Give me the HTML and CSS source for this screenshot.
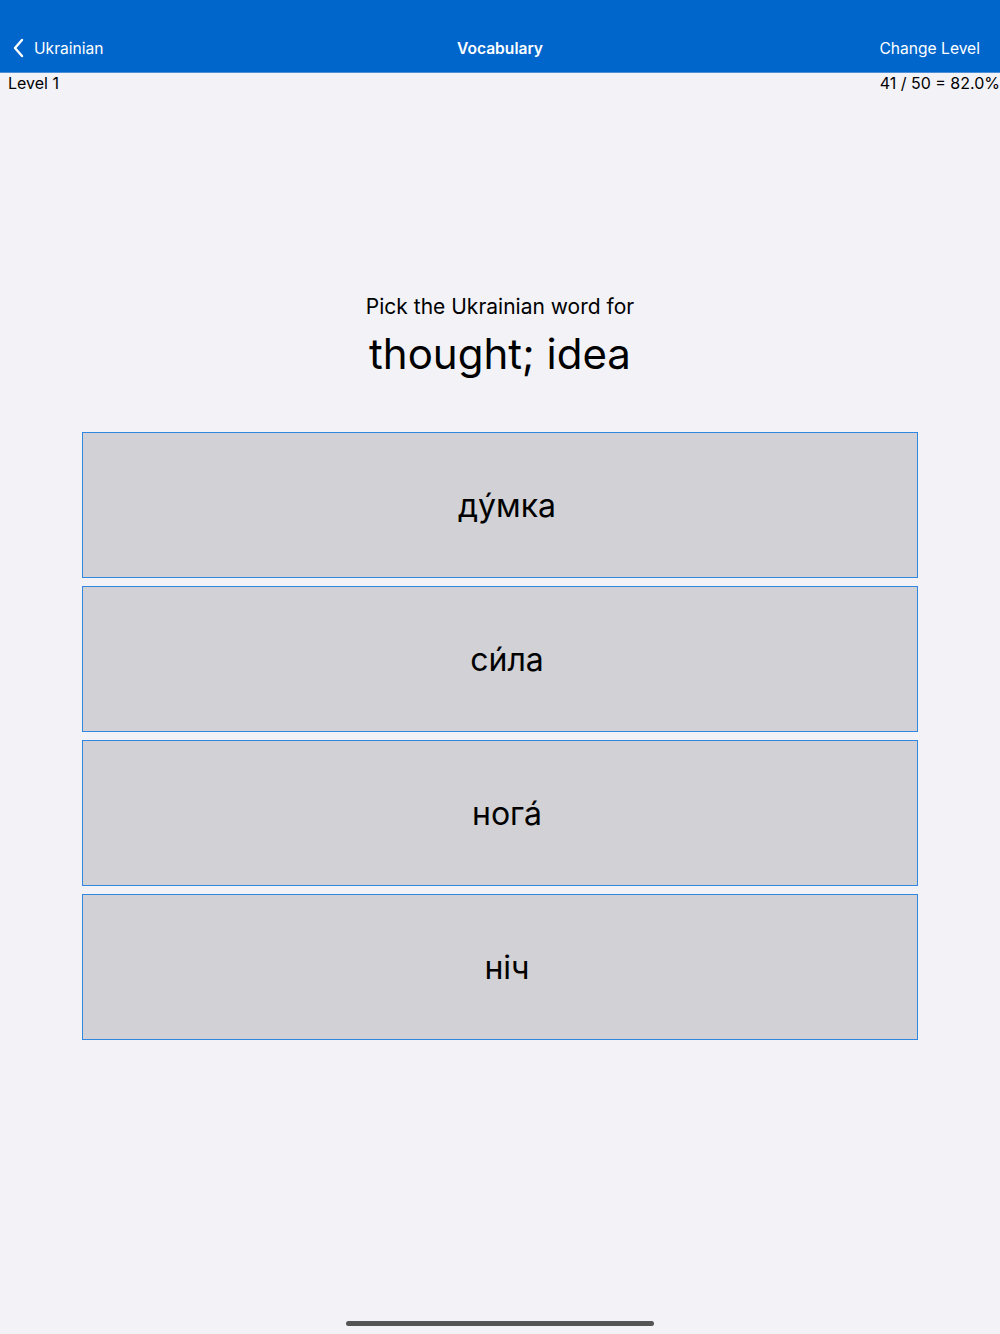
FILE: index.html
```html
<!DOCTYPE html>
<html>
<head>
<meta charset="utf-8">
<link rel="stylesheet" href="styles.css">
</head>
<body>
<div class="app">
  <header class="navbar">
    <div class="nav-left">
      <svg class="chev" width="14" height="20" viewBox="0 0 14 20"><path d="M10 2 L3 10 L10 18" fill="none" stroke="#fff" stroke-width="2.4" stroke-linecap="round" stroke-linejoin="round"/></svg>
      <span>Ukrainian</span>
    </div>
    <div class="nav-title">Vocabulary</div>
    <div class="nav-right">Change Level</div>
  </header>
  <div class="status">
    <span>Level 1</span>
    <span>41 / 50 = 82.0%</span>
  </div>
  <main class="quiz">
    <div class="prompt">Pick the Ukrainian word for</div>
    <div class="word">thought; idea</div>
    <div class="choices">
      <button class="choice">ду́мка</button>
      <button class="choice">си́ла</button>
      <button class="choice">нога́</button>
      <button class="choice">ніч</button>
    </div>
  </main>
  <div class="home-bar"></div>
</div>
</body>
</html>
```
FILE: styles.css
```css
* { box-sizing: border-box; }
html, body { margin: 0; padding: 0; }
body {
  background: #f2f2f7;
  font-family: Inter, "Noto Sans", sans-serif;
  color: #000;
  width: 1000px;
  height: 1334px;
  overflow: hidden;
}
.app {
  height: 1334px;
  display: flex;
  flex-direction: column;
}
.navbar {
  height: 73px;
  background: #0066cc;
  border-bottom: 1px solid #4d8fd6;
  display: flex;
  align-items: flex-end;
  justify-content: space-between;
  padding: 0 20px 14px 12px;
  color: #fff;
  font-size: 15.6px;
  position: relative;
}
.nav-left {
  display: flex;
  align-items: center;
  gap: 8px;
}
.chev { display: block; }
.nav-title {
  position: absolute;
  left: 0; right: 0;
  bottom: 14px;
  text-align: center;
  font-weight: 600;
  pointer-events: none;
}
.status {
  display: flex;
  justify-content: space-between;
  padding: 0 0 0 8px;
  font-size: 16px;
  height: 22px;
  line-height: 20px;
}
.quiz {
  display: flex;
  flex-direction: column;
  align-items: center;
  padding-top: 199px;
}
.prompt {
  font-size: 21px;
  line-height: 26px;
}
.word {
  font-size: 42px;
  line-height: 54px;
  margin-top: 7px;
}
.choices {
  margin-top: 51px;
  width: 836px;
  display: flex;
  flex-direction: column;
  gap: 8px;
}
.choice {
  height: 146px;
  background: #d1d1d6;
  border: 1px solid #2f87e0;
  font-family: inherit;
  font-size: 32px;
  color: #000;
  padding: 0 0 0 14px;
  margin: 0;
  cursor: pointer;
}
.home-bar {
  margin: auto auto 8px;
  width: 308px;
  height: 5px;
  border-radius: 3px;
  background: #555;
}
```
